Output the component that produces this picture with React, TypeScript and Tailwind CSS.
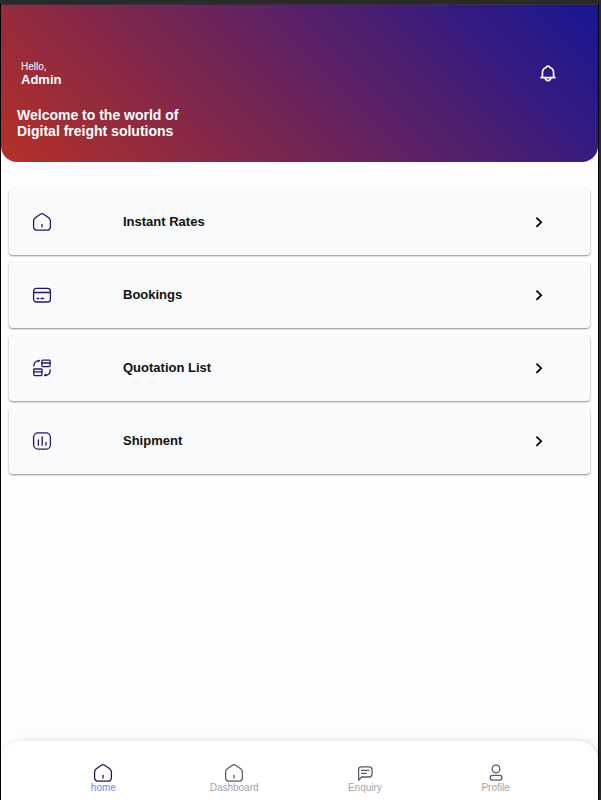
import type { ReactNode } from "react";

const iconProps = {
  width: 20,
  height: 20,
  viewBox: "0 0 20 20",
  fill: "none",
  stroke: "currentColor",
  strokeWidth: 1.3,
  strokeLinecap: "round" as const,
  strokeLinejoin: "round" as const,
  "aria-hidden": true,
};

function HomeIcon() {
  return (
    <svg {...iconProps}>
      <path d="M8.4 2.2 3.3 5.8C2.2 6.6 1.6 7.4 1.6 9v5.4c0 2.4 1.2 3.8 3.8 3.8h9.2c2.6 0 3.8-1.4 3.8-3.8V9c0-1.6-.6-2.4-1.7-3.2L11.6 2.2c-1-.8-2.2-.8-3.2 0Z" />
      <path d="M10 12.4v2.6" />
    </svg>
  );
}

function CardIcon() {
  return (
    <svg {...iconProps}>
      <rect x="1.6" y="3.4" width="16.8" height="13.6" rx="2.6" />
      <path d="M1.6 7.5h16.8M5 13.5h1.8M9 13.5h2.6" />
    </svg>
  );
}

function QuoteIcon() {
  return (
    <svg {...iconProps}>
      <rect x="9.9" y="2.2" width="8.2" height="6.4" rx="0.8" />
      <path d="M9.9 5h8.2" />
      <rect x="1.8" y="11" width="8.2" height="6.6" rx="0.8" />
      <path d="M1.8 13.8H10" />
      <path d="M1.9 8c0-3 2-5.3 5.5-5.7L6.4 3.6M18.2 12c0 3.2-2.2 5.5-5.6 5.7l1-1.5" />
    </svg>
  );
}

function ChartIcon() {
  return (
    <svg {...iconProps}>
      <rect x="1.6" y="1.8" width="16.8" height="16.4" rx="4.4" />
      <path d="M6.4 9v5.2M10.2 6v8.2M14 11.4v2.8" />
    </svg>
  );
}

function MessageIcon() {
  return (
    <svg {...iconProps}>
      <path d="M3.6 17V6.6c0-1.8 1-2.8 2.8-2.8h7.8c1.8 0 2.8 1 2.8 2.8v4.6c0 1.8-1 2.8-2.8 2.8H6.6Z" />
      <path d="M6.6 7.4h7.2M6.6 10.4h4.6" />
    </svg>
  );
}

function ProfileIcon() {
  return (
    <svg {...iconProps}>
      <circle cx="10" cy="6" r="3.8" />
      <rect x="4.2" y="12.4" width="11.8" height="4.8" rx="2.4" />
    </svg>
  );
}

function BellIcon() {
  return (
    <svg {...iconProps} strokeWidth={1.7}>
      <path d="M4.4 13.4V9c0-2.8 1.4-4.8 3.6-5.5C8.4 2.6 9.2 2.2 10 2.2s1.6.4 2 1.3c2.2.7 3.6 2.7 3.6 5.5v4.4M3 13.6h14" />
      <path d="M7.2 14.2c.3 1.5 1.3 2.4 2.8 2.4s2.5-.9 2.8-2.4" />
    </svg>
  );
}

function ChevronIcon() {
  return (
    <svg {...iconProps} strokeWidth={1.8} strokeLinecap="butt" strokeLinejoin="miter">
      <path d="m7.4 5.6 4.8 4.6-4.8 4.6" />
    </svg>
  );
}

const menu: { label: string; icon: ReactNode }[] = [
  { label: "Instant Rates", icon: <HomeIcon /> },
  { label: "Bookings", icon: <CardIcon /> },
  { label: "Quotation List", icon: <QuoteIcon /> },
  { label: "Shipment", icon: <ChartIcon /> },
];

const tabs: { label: string; icon: ReactNode; active?: boolean }[] = [
  { label: "home", icon: <HomeIcon />, active: true },
  { label: "Dashboard", icon: <HomeIcon /> },
  { label: "Enquiry", icon: <MessageIcon /> },
  { label: "Profile", icon: <ProfileIcon /> },
];

function App() {
  return (
    <div className="flex min-h-screen flex-col bg-[#2a2a2a] pt-1 pr-0.5 font-['Liberation_Sans',Arial,sans-serif]">
      <div className="flex grow flex-col border-x border-black bg-[#fefcff]">
        {/* Header */}
        <header className="rounded-b-2xl border-t border-[#3a3040] bg-linear-[45deg,#b53026,#161695] px-4 pt-14 pb-[23px] text-white">
          <div className="flex items-center justify-between pr-6 pl-1">
            <div>
              <p className="text-[10px] leading-3">Hello,</p>
              <p className="text-[13px] leading-[14px] font-bold">Admin</p>
            </div>
            <button type="button" aria-label="Notifications">
              <BellIcon />
            </button>
          </div>
          <h1 className="mt-5 text-sm leading-4 font-bold">
            Welcome to the world of
            <br />
            Digital freight solutions
          </h1>
        </header>

        {/* Menu cards */}
        <main className="flex grow flex-col gap-[7px] px-2 pt-[27px] pb-8">
          {menu.map((item) => (
            <button
              key={item.label}
              type="button"
              className="flex h-[66px] items-center rounded-sm bg-[#f9fafc] pr-[41px] pl-[23px] text-left shadow-[0_1px_2px_rgba(0,0,0,0.45)]"
            >
              <span className="w-[91px] text-[#2a1468]">{item.icon}</span>
              <span className="grow text-[13px] font-bold text-[#111]">{item.label}</span>
              <span className="text-black">
                <ChevronIcon />
              </span>
            </button>
          ))}
        </main>

        {/* Bottom navigation */}
        <nav className="grid grid-cols-4 rounded-t-[20px] bg-white px-[37px] pt-[22px] pb-[7px] shadow-[2px_0_6px_rgba(0,0,0,0.14)]">
          {tabs.map((tab) => (
            <a
              key={tab.label}
              href="#"
              className={
                tab.active
                  ? "flex flex-col items-center text-[#35104f]"
                  : "flex flex-col items-center text-[#565b6b]"
              }
            >
              {tab.icon}
              <span
                className={
                  tab.active
                    ? "text-[10px] leading-[10px] text-[#6f83f5]"
                    : "text-[10px] leading-[10px] text-[#a3a3a3]"
                }
              >
                {tab.label}
              </span>
            </a>
          ))}
        </nav>
      </div>
    </div>
  );
}

export default App;
